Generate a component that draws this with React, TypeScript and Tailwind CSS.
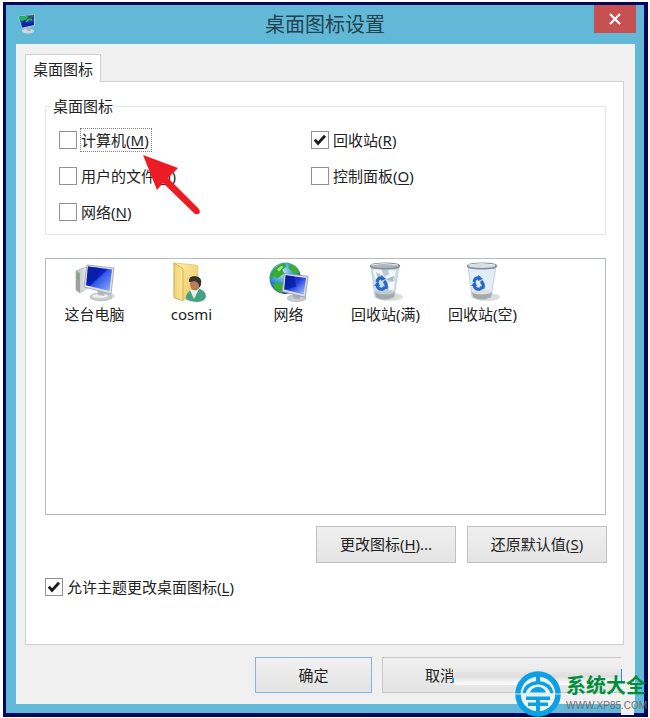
import React, { useState } from 'react';

interface CheckItemProps {
  label: string;
  hotkey: string;
  defaultChecked?: boolean;
  focused?: boolean;
}

const CheckItem: React.FC<CheckItemProps> = ({ label, hotkey, defaultChecked = false, focused = false }) => {
  const [checked, setChecked] = useState(defaultChecked);

  return (
    <label className="flex h-6 w-fit items-center gap-[3px]">
      <span className="grid size-[18px] shrink-0">
        <input
          type="checkbox"
          checked={checked}
          onChange={(e) => setChecked(e.target.checked)}
          className="col-start-1 row-start-1 size-[18px] appearance-none border border-[#929292] bg-white outline-none"
        />
        {checked && (
          <svg viewBox="0 0 18 18" className="pointer-events-none col-start-1 row-start-1 size-[18px]">
            <path d="M3.8 8.6 L7 12.4 L14 4.8" fill="none" stroke="#1c1c1c" strokeWidth="2.8" />
          </svg>
        )}
      </span>
      <span className={`border border-dotted leading-[22px] ${focused ? 'border-[#808080] pr-0.5' : 'border-transparent'}`}>
        {label}(<u className="underline-offset-2">{hotkey}</u>)
      </span>
    </label>
  );
};

const MonitorIcon: React.FC = () => (
  <svg viewBox="0 0 42 40" className="h-10 w-[42px]">
    <defs>
      <linearGradient id="pcScreen" x1="0" y1="0" x2="1" y2="1">
        <stop offset="0" stopColor="#1029a8" />
        <stop offset="0.45" stopColor="#0b20c4" />
        <stop offset="0.5" stopColor="#3157e8" />
        <stop offset="1" stopColor="#91b4fb" />
      </linearGradient>
      <linearGradient id="pcCase" x1="0" y1="0" x2="1" y2="0">
        <stop offset="0" stopColor="#b9bdc0" />
        <stop offset="1" stopColor="#f2f3f3" />
      </linearGradient>
    </defs>
    <ellipse cx="29" cy="34" rx="12" ry="4" fill="#dcdcdc" />
    <path d="M2 9 L12 5 L15 7 V25 L6 31 L2 28 Z" fill="url(#pcCase)" stroke="#a9adaf" strokeWidth="0.7" />
    <path d="M2 9 L6 11 V31 L2 28 Z" fill="#9ca0a3" />
    <path d="M2.6 12 L5 13 M2.6 15 L5 16" stroke="#4fc52f" strokeWidth="1.3" />
    <ellipse cx="27" cy="35" rx="11" ry="3.8" fill="#c9cccf" stroke="#a6a9ac" strokeWidth="0.6" />
    <ellipse cx="26" cy="34" rx="8" ry="2" fill="#eef0f1" />
    <path d="M23 26 L32 28 L30 34 L24 33 Z" fill="#b5b9bd" />
    <path d="M13 3 L40 6 L37 32 L10 25 Z" fill="#dfe2e5" stroke="#9ba0a8" strokeWidth="0.8" />
    <path d="M14 4.5 L38 7.5 L35.4 29 L12 23.2 Z" fill="url(#pcScreen)" />
    <path d="M14 4.5 L26 6 L23 17 L13 20 Z" fill="#071d9c" opacity="0.6" />
  </svg>
);

const UserFolderIcon: React.FC = () => (
  <svg viewBox="0 0 42 40" className="h-10 w-[42px]">
    <defs>
      <linearGradient id="folderBack" x1="0" y1="0" x2="1" y2="1">
        <stop offset="0" stopColor="#fff0a8" />
        <stop offset="1" stopColor="#e6c461" />
      </linearGradient>
      <linearGradient id="folderFront" x1="0" y1="0" x2="1" y2="0">
        <stop offset="0" stopColor="#f1d272" />
        <stop offset="1" stopColor="#fbe89c" />
      </linearGradient>
    </defs>
    <path d="M3 1 L25 3 Q27 3 27 6 V34 L12 38 L3 36 Z" fill="url(#folderBack)" stroke="#dfc069" strokeWidth="0.7" />
    <path d="M3 1 L11 6 Q12 7 12 9 V39 L5 36 Q3 35 3 32 Z" fill="url(#folderFront)" stroke="#cda745" strokeWidth="0.8" />
    <path d="M15 34 Q18 27 25 26 Q34 27 35 34 Q35 39 27 40 Q19 40 15 37 Z" fill="#45a183" />
    <path d="M19 28 L23 37 L28 27 Z" fill="#e8f3ef" />
    <ellipse cx="24" cy="22" rx="5" ry="6.5" fill="#b77d55" />
    <path d="M18 20 Q17 14 24 14 Q32 15 30 23 L28 26 Q29 20 23 19 Q21 20 18 20" fill="#38312d" />
  </svg>
);

const NetworkIcon: React.FC = () => (
  <svg viewBox="0 0 42 42" className="h-10 w-[42px]">
    <defs>
      <radialGradient id="globe" cx="0.4" cy="0.3" r="0.75">
        <stop offset="0" stopColor="#c9edff" />
        <stop offset="0.45" stopColor="#3d9bdd" />
        <stop offset="1" stopColor="#0a3b9a" />
      </radialGradient>
      <linearGradient id="netScreen" x1="0" y1="0" x2="1" y2="1">
        <stop offset="0" stopColor="#071f9e" />
        <stop offset="0.45" stopColor="#1938d8" />
        <stop offset="1" stopColor="#b0caff" />
      </linearGradient>
    </defs>
    <circle cx="17" cy="17" r="16.5" fill="url(#globe)" />
    <path d="M4 9 Q9 2 17 1 L18 5 L14 8 L16 12 L9 17 L5 15 L2 18 Q1 13 4 9" fill="#35ab2e" />
    <path d="M22 2 Q30 4 32 11 L28 13 L23 9 L20 6 Z M7 21 L14 23 L17 29 L13 33 Q7 30 4 25 Z" fill="#3cae32" />
    <path d="M8 8 L13 4 L15 5 L11 10 Z" fill="#a5e178" />
    <ellipse cx="29" cy="38" rx="10" ry="3.5" fill="#c8cbd0" stroke="#a5a8ad" strokeWidth="0.6" />
    <path d="M25 32 L33 34 L32 39 L26 38 Z" fill="#a9adb4" />
    <path d="M16 12 L41 15 L38 37 L14 31 Z" fill="#dce0e6" stroke="#92989f" strokeWidth="0.9" />
    <path d="M17.5 14 L39 16.8 L36.4 34 L16 29 Z" fill="url(#netScreen)" />
    <path d="M17.5 14 L26 15 L29 26 L16 29 Z" fill="#03148d" opacity="0.55" />
  </svg>
);

const RecycleBinIcon: React.FC<{ full?: boolean }> = ({ full = false }) => (
  <svg viewBox="0 0 42 40" className="h-10 w-[42px]">
    <ellipse cx="26" cy="35" rx="12" ry="4" fill="#dddddd" />
    <path d="M6 4 L10 35 Q19 41 29 35 L34 4 Z" fill={full ? '#cfdde8' : '#e0edfa'} stroke="#b9c9d7" strokeWidth="0.8" />
    {full && (
      <g>
        <path d="M8 8 L16 6 L19 14 L11 19 Z M21 7 L31 9 L28 19 L21 17 Z M22 21 L30 19 L28 32 L21 30 Z" fill="#f4f8fa" />
        <path d="M16 6 L23 5 L24 13 L19 14 Z M11 30 L19 27 L21 34 L13 36 Z" fill="#b8cad7" />
        <path d="M21 17 L29 14 L28 20 Z M19 25 L24 24 L23 29 Z M11 10 L16 13 L13 16 Z" fill="#a9bccb" />
      </g>
    )}
    <path d="M10 30 L11 35 Q19 40 29 35 L30 30 Q20 34 10 30" fill="#a4a8aa" />
    <ellipse cx="20" cy="30" rx="9.6" ry="2.6" fill={full ? '#c0ccd5' : '#dcdfe1'} />
    <ellipse cx="20" cy="4" rx="14.5" ry="2.8" fill={full ? '#aab7c1' : '#d6e0e9'} stroke="#878f95" strokeWidth="1.4" />
    <path d="M6 3 Q19 0 33 3" fill="none" stroke="#f2f5f7" strokeWidth="0.9" />
    <g fill="none" stroke="#2568c7" strokeWidth="3.2">
      <path d="M12 20 Q13 15 18 16" />
      <path d="M19 19 Q22 22 21 26" />
      <path d="M18 27 Q13 28 12 23" />
    </g>
    <path d="M16 13 L21 17 L16 19 Z M23 26 L17 29 L18 24 Z M9 24 L13 19 L15 24 Z" fill="#2568c7" />
  </svg>
);

const TitleIcon: React.FC = () => (
  <svg viewBox="0 0 18 20" className="h-5 w-[18px]">
    <ellipse cx="10" cy="17" rx="6" ry="2.5" fill="#d2d9dd" />
    <path d="M8 13 L13 12 L13 17 L9 17 Z" fill="#aab4bb" />
    <path d="M0 2 L17 0 L17 12 L4 15 Z" fill="#a9cddd" />
    <path d="M1 2.5 L16 1 L16 11 L4 13.5 Z" fill="#1744ac" />
    <path d="M1 2.5 L11 1.5 L8 6 L3 7 Z" fill="#24b756" />
    <path d="M5 7 L9 5 L9 9 L15 8 L16 11 L4 13.5 Z" fill="#1025a2" />
    <path d="M8 8 L11 5 L14 6" fill="none" stroke="#2fc45f" strokeWidth="1.6" />
    <path d="M11 5 L16 1" stroke="#75552f" strokeWidth="1.6" />
  </svg>
);

const desktopIcons = [
  { name: '这台电脑', icon: <MonitorIcon /> },
  { name: 'cosmi', icon: <UserFolderIcon /> },
  { name: '网络', icon: <NetworkIcon /> },
  { name: '回收站(满)', icon: <RecycleBinIcon full /> },
  { name: '回收站(空)', icon: <RecycleBinIcon /> },
];

const buttonStyle = 'border bg-linear-to-b from-[#f0f0f0] to-[#e4e4e4]';

// Site logo in the lower right corner, with the pale strip behind it
const Watermark: React.FC = () => (
  <div className="pointer-events-none absolute right-0 bottom-0 h-[72px] w-[198px]">
    <div className="absolute top-5 left-px h-[18px] w-[168px] bg-linear-to-b from-[#efefef] via-[#dedede] to-white" />
    <div className="absolute top-[31px] left-0 h-[5px] w-0.5 bg-[#1c9ce5]" />
    <div className="absolute top-0 right-4 h-[68px] w-[13px] bg-[#f0f0f0]" />
    <div className="absolute top-[22px] right-7 h-3 w-px bg-[#1c8df0]" />
    <svg viewBox="0 0 46 46" className="absolute top-[24px] left-[63px] size-[46px]">
      <circle cx="23" cy="23" r="20" fill="#eff3f5" stroke="#0ba1e2" strokeWidth="5.5" />
      <path d="M23 4 V11" stroke="#0ba1e2" strokeWidth="4" />
      <path d="M9 22 Q11 13 23 11.5 Q35 13 37 22" fill="none" stroke="#0ba1e2" strokeWidth="3.4" />
      <path d="M15 21.5 Q17 16 23 16 Q29 16 31 21.5 Z" fill="#0ba1e2" />
      <path d="M11 25.5 H35 V29 H25 V31.5 H33 V35 H25 V42 H21 V35 H13 V31.5 H21 V29 H11 Z" fill="#0ba1e2" />
      <path d="M0 23 H46" stroke="#d4ecf4" strokeWidth="1" />
    </svg>
    <div className="absolute top-[27px] left-[114px] whitespace-nowrap">
      <p className="text-xl leading-6 font-bold text-[#008e3c]">系统大全</p>
      <p className="font-['Liberation_Sans',sans-serif] text-[10px] leading-4 text-[#707070]">WWW.XP85.COM</p>
    </div>
  </div>
);

export default function App() {
  return (
    <div className="relative bg-white pt-0.5 pr-0.5 pb-0.5 pl-[3px] font-['Noto_Sans','Noto_Sans_CJK_SC',sans-serif] text-[15px] text-[#222222]">
      <div className="border-[3px] border-r-4 border-b-4 border-[#03075c] bg-[#62b9d7]">
        <header className="grid h-[39px] grid-cols-[42px_1fr_42px] items-start px-2">
          <div className="pt-[9px] pl-1">
            <TitleIcon />
          </div>
          <h1 className="pt-[5px] text-center text-xl leading-[30px] text-[#24424d]">桌面图标设置</h1>
          <button type="button" aria-label="关闭" className="flex h-7 items-center justify-center bg-[#c75050]">
            <svg viewBox="0 0 12 12" className="size-3">
              <path d="M1 1 L11 11 M11 1 L1 11" stroke="#ffffff" strokeWidth="2.2" />
            </svg>
          </button>
        </header>

        <main className="mr-[9px] mb-[9px] ml-[10px] bg-[#f0f0f0] pt-[10px] pr-[11px] pb-[11px] pl-[9px]">
          <div role="tablist" className="flex">
            <button
              type="button"
              role="tab"
              aria-selected="true"
              className="relative -mb-px h-7 border border-b-0 border-[#d0d0d0] bg-white px-[7px] leading-6"
            >
              桌面图标
            </button>
          </div>

          <section className="border border-[#d0d0d0] bg-white pt-3 pr-[17px] pb-[45px] pl-[19px]">
            <fieldset className="relative h-[141px] border border-[#e6e6e6] px-[13px]">
              <legend className="-ml-2 px-0.5 leading-6">桌面图标</legend>
              <div className="grid grid-cols-[252px_1fr] gap-y-3 pt-[10px]">
                <CheckItem label="计算机" hotkey="M" focused />
                <CheckItem label="回收站" hotkey="R" defaultChecked />
                <CheckItem label="用户的文件" hotkey="U" />
                <CheckItem label="控制面板" hotkey="O" />
                <CheckItem label="网络" hotkey="N" />
              </div>
              {/* Red pointer to the first option */}
              <svg viewBox="0 0 62 64" className="pointer-events-none absolute top-9 left-[96px] h-16 w-[62px]">
                <path d="M1 1 L36 14 L26 24 L57 55 Q60 61 53 60 L21 29 L15 36 Z" fill="#ed1c24" />
              </svg>
            </fieldset>

            <ul className="mt-[23px] flex h-[257px] border border-[#b4bbc3] pt-[3px]">
              {desktopIcons.map((item) => (
                <li key={item.name} className="flex w-[97px] flex-col items-center">
                  {item.icon}
                  <span className="leading-6">{item.name}</span>
                </li>
              ))}
            </ul>

            <div className="mt-[11px] -mr-px flex justify-end gap-[11px]">
              <button type="button" className={`h-[37px] w-[140px] border-[#c0c0c0] ${buttonStyle}`}>
                更改图标(<u className="underline-offset-2">H</u>)...
              </button>
              <button type="button" className={`h-[37px] w-[140px] border-[#c0c0c0] ${buttonStyle}`}>
                还原默认值(<u className="underline-offset-2">S</u>)
              </button>
            </div>

            <div className="mt-3">
              <CheckItem label="允许主题更改桌面图标" hotkey="L" defaultChecked />
            </div>
          </section>

          <footer className="mt-3 flex justify-end gap-[10px] pr-[3px]">
            <button type="button" className={`h-9 w-[117px] border-[#7eb4ea] ${buttonStyle}`}>
              确定
            </button>
            <button type="button" className={`h-9 w-[239px] border-r-0 border-[#c8c8c8] pl-[42px] text-left ${buttonStyle}`}>
              取消
            </button>
          </footer>
        </main>
      </div>
      <Watermark />
    </div>
  );
}
